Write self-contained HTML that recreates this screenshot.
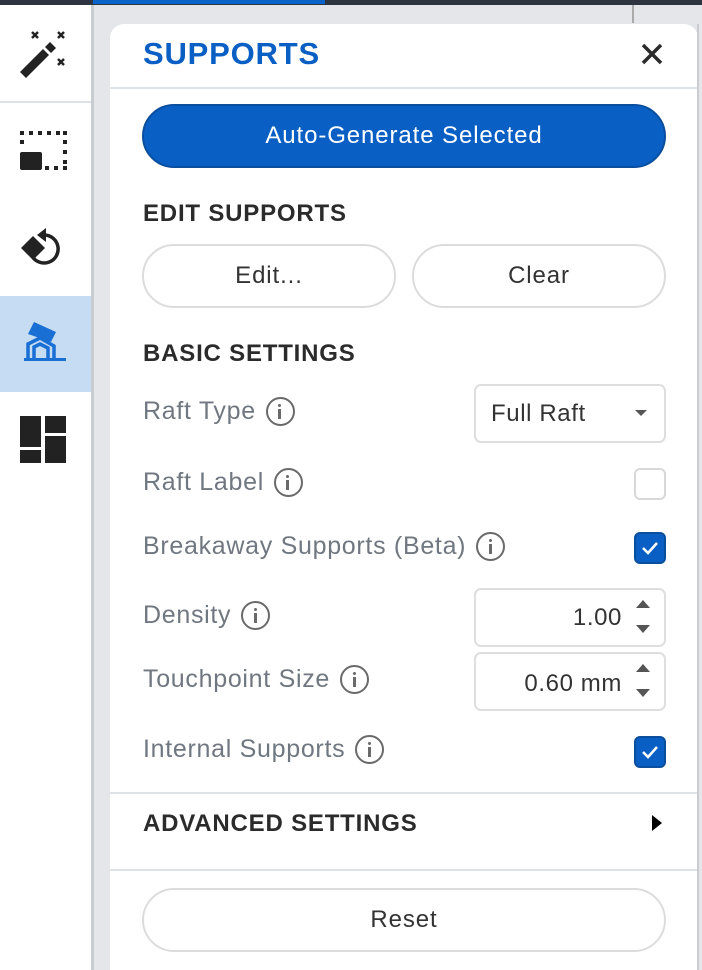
<!DOCTYPE html>
<html><head><style>
*{margin:0;padding:0;box-sizing:border-box}
body{width:702px;height:970px;overflow:hidden;background:#e4e6e9;font-family:"Liberation Sans",sans-serif;position:relative}
.a{position:absolute}
.lbl{position:absolute;left:143px;font-size:25px;letter-spacing:0.7px;color:#707780;display:flex;align-items:center;gap:10px}
.info{width:29px;height:29px;border:2.5px solid #6a6a6a;border-radius:50%;position:relative;display:inline-block}
.info:before{content:"";position:absolute;left:10.5px;top:5px;width:3px;height:3px;background:#6a6a6a;border-radius:50%}
.info:after{content:"";position:absolute;left:10.5px;top:10px;width:3px;height:10px;background:#6a6a6a}
.h{position:absolute;left:143px;font-size:24px;letter-spacing:0.8px;font-weight:bold;color:#2b2b2b}
.btn{position:absolute;border:2px solid #dcdcdc;border-radius:32px;background:#fff;font-size:24px;letter-spacing:0.9px;color:#333;display:flex;align-items:center;justify-content:center}
.box{position:absolute;border:2px solid #dedede;border-radius:7px;background:#fff;font-size:24px;letter-spacing:0.6px;color:#333}
.cb{position:absolute;left:634px;width:32px;height:32px;border-radius:6px}
.on{background:#0a5fc4;border:2px solid #0a4e9e}
.off{border:2px solid #d8d8d8;background:#fff}
.line{position:absolute;left:110px;width:587px;height:2px;background:#dde2e8}
.up{position:absolute;width:0;height:0;border-left:7px solid transparent;border-right:7px solid transparent;border-bottom:8px solid #555}
.dn{position:absolute;width:0;height:0;border-left:7px solid transparent;border-right:7px solid transparent;border-top:8px solid #555}
</style></head><body>
<div class="a" style="left:0;top:0;width:702px;height:5px;background:#2e3540"></div>
<div class="a" style="left:93px;top:0;width:232px;height:4px;background:#0a63c9"></div>
<div class="a" style="left:0;top:5px;width:91px;height:965px;background:#fff"></div>
<div class="a" style="left:91px;top:5px;width:3px;height:965px;background:#c9cdd2"></div>
<div class="a" style="left:0;top:101px;width:91px;height:2px;background:#dde2e8"></div>
<div class="a" style="left:0;top:296px;width:91px;height:96px;background:#c5dcf2"></div>
<div class="a" style="left:632px;top:5px;width:2px;height:18px;background:#aaa"></div>
<svg class="a" style="left:18px;top:28px" width="52" height="52" viewBox="0 0 52 52">
<g stroke="#222" stroke-width="2.5"><path d="M14 4l6 6M20 4l-6 6M40 4l6 6M46 4l-6 6M40 31l6 6M46 31l-6 6"/></g>
<path d="M2 44l23-23 6 6-23 23z" fill="#222"/><path d="M27 19l5-5 6 6-5 5z" fill="#222"/></svg>
<svg class="a" style="left:20px;top:131px" width="48" height="40" viewBox="0 0 48 40">
<g fill="#222"><rect x="0" y="0" width="4" height="4"/><rect x="9" y="0" width="4" height="4"/><rect x="18" y="0" width="4" height="4"/><rect x="27" y="0" width="4" height="4"/><rect x="36" y="0" width="4" height="4"/><rect x="43" y="0" width="4" height="4"/><rect x="0" y="9" width="4" height="4"/><rect x="43" y="9" width="4" height="4"/><rect x="43" y="19" width="4" height="4"/><rect x="43" y="29" width="4" height="4"/><rect x="43" y="35" width="4" height="4"/><rect x="34" y="35" width="4" height="4"/><rect x="25" y="35" width="4" height="4"/><rect x="0" y="21" width="22" height="18" rx="2"/></g></svg>
<svg class="a" style="left:20px;top:226px" width="48" height="48" viewBox="0 0 48 48">
<path d="M1 22l12-12 12 12-12 12z" fill="#222"/>
<path d="M24 9a14 14 0 1 1-12 21" fill="none" stroke="#222" stroke-width="3.5"/><path d="M17 9l9-7v14z" fill="#222"/></svg>
<svg class="a" style="left:22px;top:318px" width="46" height="46" viewBox="0 0 46 46">
<path d="M6 16l6-12 22 10-5 10z" fill="#1a6fd4"/><path d="M2 40h42v3H2z" fill="#1a6fd4"/>
<path d="M6 40V26l12-6 14 8v12M12 40V29l6-3 8 4v10" fill="none" stroke="#1a6fd4" stroke-width="3.5"/></svg>
<svg class="a" style="left:20px;top:416px" width="48" height="48" viewBox="0 0 48 48"><g fill="#222">
<rect x="0" y="0" width="21" height="31"/><rect x="25" y="0" width="21" height="17"/><rect x="0" y="34" width="21" height="13"/><rect x="25" y="20" width="21" height="27"/></g></svg>
<div class="a" style="left:110px;top:24px;width:588px;height:946px;background:#fff;border-radius:14px 14px 0 0"></div>
<div class="a" style="left:697px;top:24px;width:5px;height:946px;background:#e4e6e9"></div>
<div class="a" style="left:697px;top:24px;width:2px;height:946px;background:#c9cdd2"></div>
<div class="a" style="left:143px;top:36px;font-size:31px;font-weight:bold;color:#0a5fc4;letter-spacing:0.8px">SUPPORTS</div>
<svg class="a" style="left:641px;top:43px" width="22" height="22" viewBox="0 0 22 22"><path d="M2 2l18 18M20 2L2 20" stroke="#2b2b2b" stroke-width="3.5"/></svg>
<div class="line" style="top:87px"></div>
<div class="btn" style="left:142px;top:104px;width:524px;height:64px;background:#0a5fc4;border-color:#0a4e9e;color:#fff">Auto-Generate Selected</div>
<div class="h" style="top:200px">EDIT SUPPORTS</div>
<div class="btn" style="left:142px;top:244px;width:254px;height:64px">Edit...</div>
<div class="btn" style="left:412px;top:244px;width:254px;height:64px">Clear</div>
<div class="h" style="top:340px">BASIC SETTINGS</div>
<div class="lbl" style="top:397px">Raft Type <span class="info"></span></div>
<div class="box" style="left:474px;top:384px;width:192px;height:59px;padding:14px 0 0 15px">Full Raft</div>
<div class="dn" style="left:635px;top:410px;border-left-width:6px;border-right-width:6px;border-top-width:6px"></div>
<div class="lbl" style="top:468px">Raft Label <span class="info"></span></div>
<div class="cb off" style="top:468px"></div>
<div class="lbl" style="top:532px">Breakaway Supports (Beta) <span class="info"></span></div>
<div class="cb on" style="top:532px"><svg width="28" height="28" viewBox="0 0 28 28"><path d="M7 14l5 5 9-10" fill="none" stroke="#fff" stroke-width="2.5"/></svg></div>
<div class="lbl" style="top:601px">Density <span class="info"></span></div>
<div class="box" style="left:474px;top:588px;width:192px;height:59px;padding:14px 42px 0 0;text-align:right">1.00</div>
<div class="up" style="left:636px;top:600px"></div><div class="dn" style="left:636px;top:625px"></div>
<div class="lbl" style="top:665px">Touchpoint Size <span class="info"></span></div>
<div class="box" style="left:474px;top:652px;width:192px;height:59px;padding:16px 42px 0 0;text-align:right">0.60 mm</div>
<div class="up" style="left:636px;top:664px"></div><div class="dn" style="left:636px;top:689px"></div>
<div class="lbl" style="top:735px">Internal Supports <span class="info"></span></div>
<div class="cb on" style="top:736px"><svg width="28" height="28" viewBox="0 0 28 28"><path d="M7 14l5 5 9-10" fill="none" stroke="#fff" stroke-width="2.5"/></svg></div>
<div class="line" style="top:792px"></div>
<div class="h" style="top:810px">ADVANCED SETTINGS</div>
<div class="a" style="left:652px;top:815px;width:0;height:0;border-top:8px solid transparent;border-bottom:8px solid transparent;border-left:10px solid #000"></div>
<div class="line" style="top:869px"></div>
<div class="btn" style="left:142px;top:888px;width:524px;height:64px">Reset</div>
</body></html>
